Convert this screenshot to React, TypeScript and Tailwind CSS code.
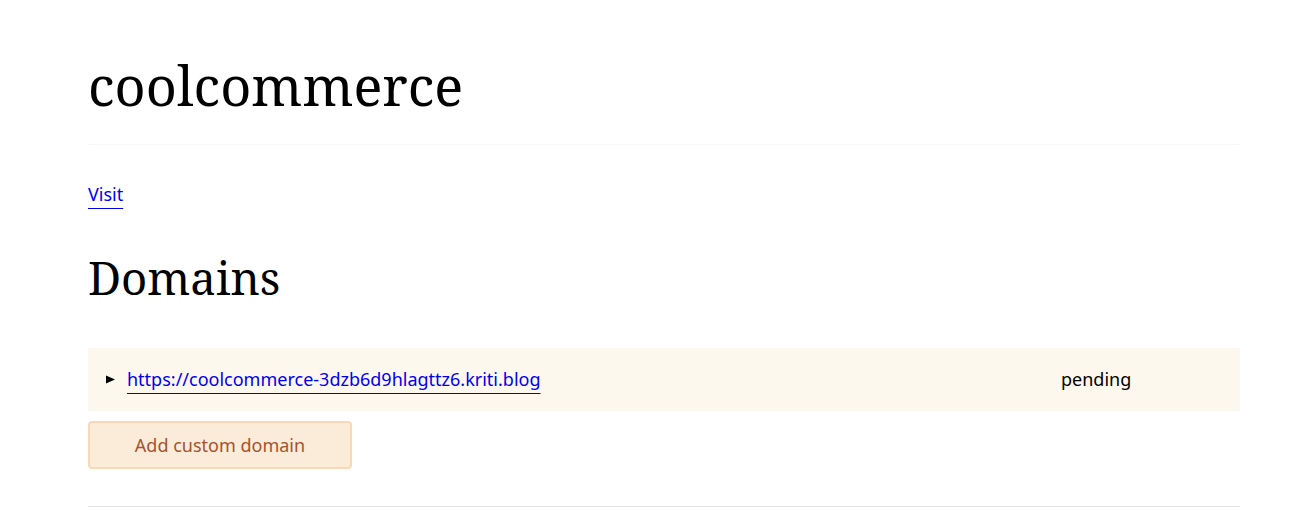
export default function App() {
  return (
    <div className="min-h-screen bg-white text-black">
      <main className="ml-[88px] w-[1152px] pt-[45px] font-['Noto_Sans','Open_Sans',sans-serif]">
        <h1 className="font-['Noto_Serif','DejaVu_Serif',serif] text-[54px] leading-[80px] font-normal">
          coolcommerce
        </h1>
        <hr className="mt-[19px] border-0 border-t border-[#f6f6fb]" />
        <div className="mt-[37px]">
          <a href="#" className="text-[18px] leading-6 text-[#0000ee] underline decoration-1 underline-offset-[7px]">
            Visit
          </a>
        </div>
        <h2 className="mt-[38px] font-['Noto_Serif','DejaVu_Serif',serif] text-[45.5px] leading-[64px] font-normal">
          Domains
        </h2>
        <details className="mt-[39px] bg-[#fdf8ee]">
          <summary className="flex h-[63px] cursor-pointer items-center pl-[18px] text-[18px] list-none">
            <svg width="9" height="9" viewBox="0 0 9 9" className="mr-[12px]">
              <polygon points="0,0.5 9,4.5 0,8.5" fill="#000" />
            </svg>
            <a href="#" className="w-[934px] text-[#0000ee] underline decoration-1 underline-offset-[7px]">
              https://coolcommerce-3dzb6d9hlagttz6.kriti.blog
            </a>
            <span>pending</span>
          </summary>
        </details>
        <button className="mt-[10px] h-[48px] w-[264px] rounded-[4px] border-2 border-[#fbd9b7] bg-[#fbebd9] text-[18px] text-[#a5532e]">
          Add custom domain
        </button>
        <hr className="mt-[37px] border-0 border-t border-[#e3e3e3]" />
      </main>
    </div>
  );
}
